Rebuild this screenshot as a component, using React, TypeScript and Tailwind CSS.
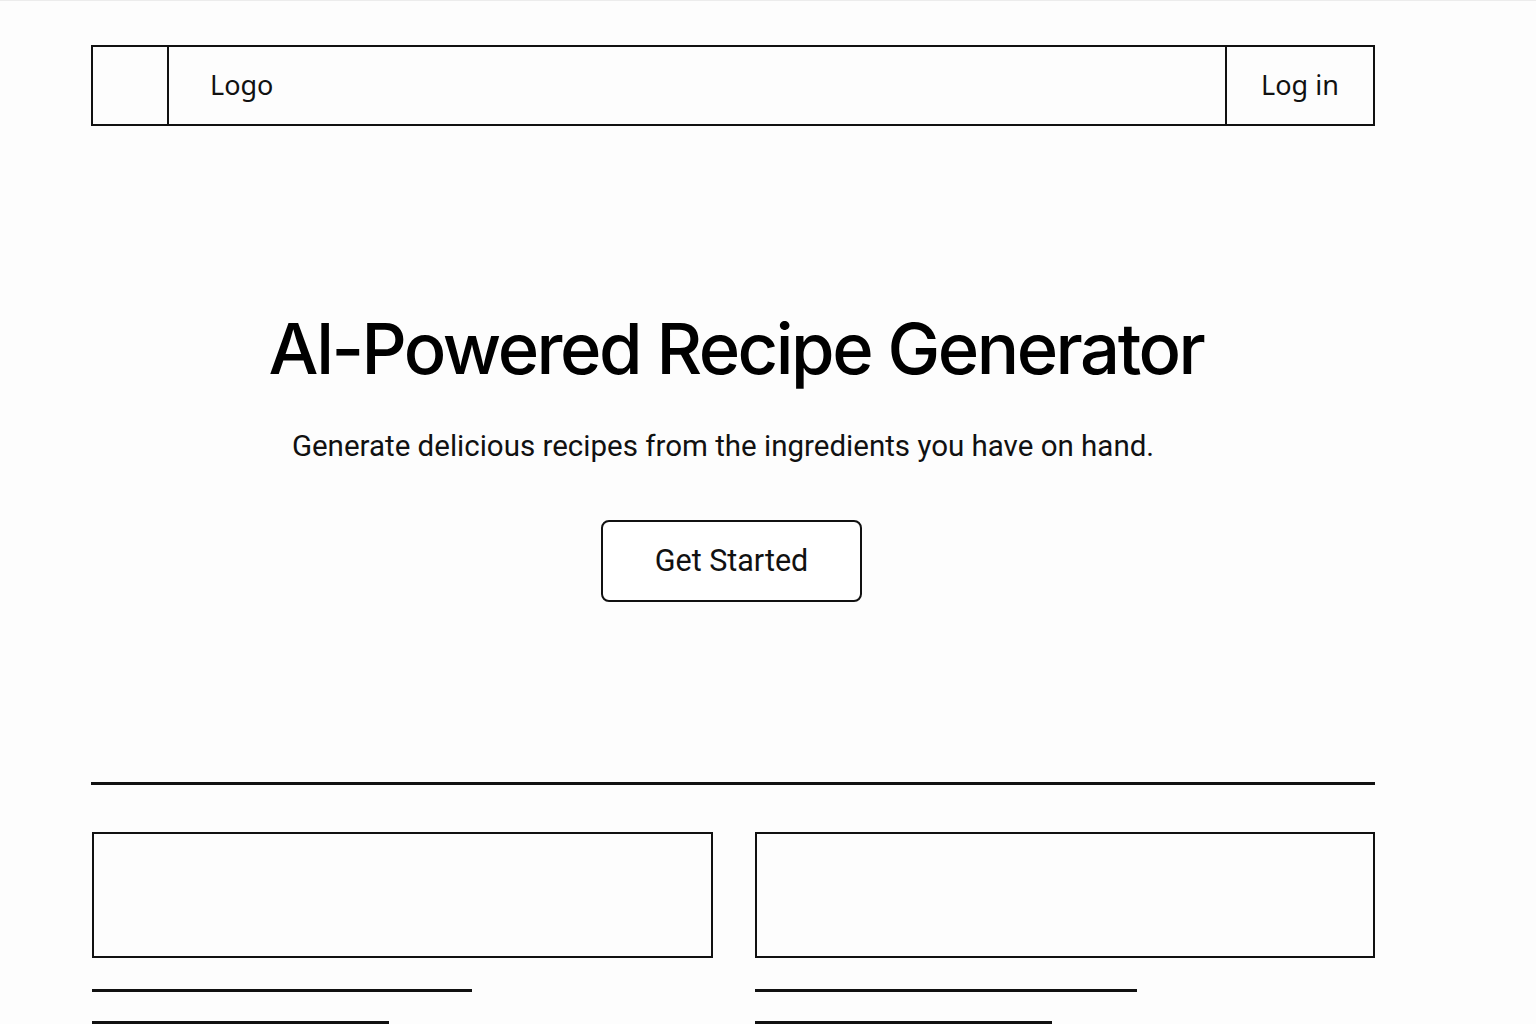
import React from 'react';

export default function App() {
  return (
    <div className="min-h-[1024px] bg-[#fdfdfd] border-t border-[#ececec] overflow-hidden">
      <div className="ml-[91px] w-[1284px] pt-[44px]">
        {/* Header */}
        <header className="flex h-[81px] border-2 border-[#111]">
          <div className="w-[76px] border-r-2 border-[#111]" />
          <div className="flex-1 flex items-center pl-[41px] text-[27px] text-[#111] font-['Noto_Sans',sans-serif]">
            Logo
          </div>
          <div className="w-[148px] border-l-2 border-[#111] flex items-center justify-center text-[27px] text-[#111] font-['Noto_Sans',sans-serif]">
            Log in
          </div>
        </header>

        {/* Hero */}
        <section className="flex flex-col items-center pt-[188px]">
          <h1 className="text-[70.5px] leading-none font-medium tracking-[-0.035em] text-black font-['Inter',sans-serif] pl-[6px]">
            Al-Powered Recipe Generator
          </h1>
          <p className="mt-[39px] text-[29.5px] text-[#111] font-['Roboto',sans-serif] pr-[20px]">
            Generate delicious recipes from the ingredients you have on hand.
          </p>
          <button className="mt-[52px] mr-[3px] w-[261px] h-[82px] rounded-[8px] border-2 border-[#111] bg-white text-[30.5px] text-[#111] font-['Roboto',sans-serif]">
            Get Started
          </button>
        </section>

        {/* Divider */}
        <div className="mt-[180px] h-[3px] bg-[#111]" />

        {/* Cards */}
        <div className="mt-[47px] grid grid-cols-2 gap-x-[42px] pl-[1px]">
          {[380, 382].map((w, i) => (
            <div key={i} className="flex flex-col">
              <div className="h-[126px] border-2 border-[#111]" />
              <div className="mt-[31px] h-[3px] bg-[#111]" style={{ width: w }} />
              <div className="mt-[29px] h-[3px] w-[297px] bg-[#111]" />
            </div>
          ))}
        </div>
      </div>
    </div>
  );
}
